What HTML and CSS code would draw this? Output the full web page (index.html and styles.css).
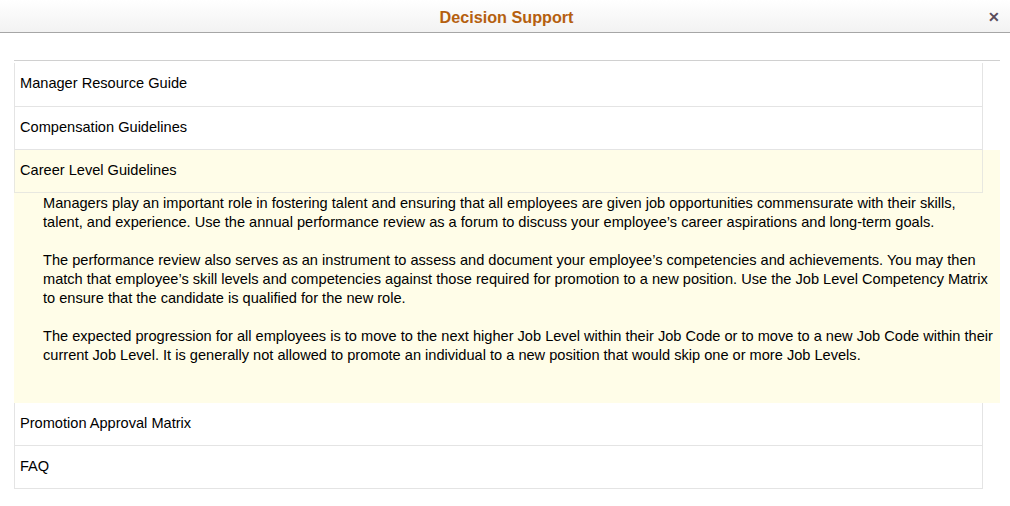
FILE: index.html
```html
<!DOCTYPE html>
<html>
<head>
<meta charset="utf-8">
<link rel="stylesheet" href="styles.css">
</head>
<body>
<div class="header">
  <div class="title">Decision Support</div>
  <div class="close">&#x2715;</div>
</div>
<div class="main">
  <div class="sep"></div>
  <div class="list">
    <div class="row first">Manager Resource Guide</div>
    <div class="row">Compensation Guidelines</div>
    <div class="expanded">
      <div class="row open">Career Level Guidelines</div>
      <div class="content">
        <p>Managers play an important role in fostering talent and ensuring that all employees are given job opportunities commensurate with their skills, talent, and experience. Use the annual performance review as a forum to discuss your employee’s career aspirations and long-term goals.</p>
        <p>The performance review also serves as an instrument to assess and document your employee’s competencies and achievements. You may then match that employee’s skill levels and competencies against those required for promotion to a new position. Use the Job Level Competency Matrix to ensure that the candidate is qualified for the new role.</p>
        <p>The expected progression for all employees is to move to the next higher Job Level within their Job Code or to move to a new Job Code within their current Job Level. It is generally not allowed to promote an individual to a new position that would skip one or more Job Levels.</p>
      </div>
    </div>
    <div class="row">Promotion Approval Matrix</div>
    <div class="row">FAQ</div>
  </div>
</div>
</body>
</html>
```
FILE: styles.css
```css
html, body {
  margin: 0;
  padding: 0;
  background: #ffffff;
  font-family: "Liberation Sans", Arial, sans-serif;
  color: #000;
}
.header {
  height: 32px;
  border-bottom: 1px solid #a6a6a6;
  background: linear-gradient(#ffffff, #f2f2f2);
  display: flex;
  align-items: center;
  justify-content: center;
  position: relative;
}
.title {
  font-size: 16.2px;
  font-weight: bold;
  color: #b5600f;
  margin-top: 3px;
  margin-left: 3px;
}
.close {
  position: absolute;
  right: 10px;
  top: 9px;
  font-size: 14px;
  font-weight: bold;
  color: #5a4c5c;
}
.main {
  padding: 27px 10px 0 14px;
}
.sep {
  height: 1px;
  background: #d0d0d0;
}
.list {
  margin-top: 2px;
}
.row {
  box-sizing: border-box;
  width: 969px;
  height: 43px;
  border-left: 1px solid #e4e4e4;
  border-right: 1px solid #e4e4e4;
  border-bottom: 1px solid #e4e4e4;
  padding-left: 5px;
  padding-bottom: 3px;
  font-size: 14.6px;
  display: flex;
  align-items: center;
}
.row.first {
  height: 44px;
  padding-bottom: 4px;
}
.expanded {
  background: #fffde8;
}
.row.open {
  border-color: #e8e8e0;
  padding-bottom: 2px;
}
.content {
  padding: 1px 3px 38px 29px;
  font-size: 14.6px;
  line-height: 19px;
}
.content p {
  margin: 0 0 19px 0;
}
.content p:last-child {
  margin-bottom: 0;
}
```
